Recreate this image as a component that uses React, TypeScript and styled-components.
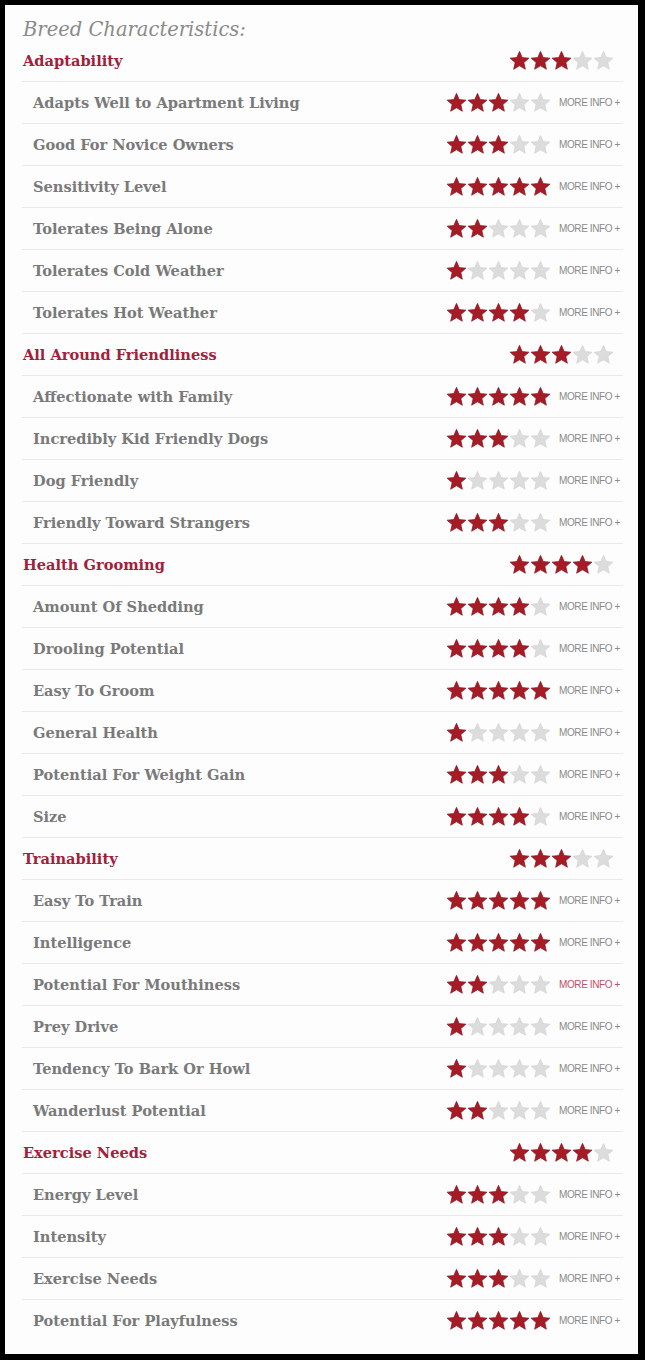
import React from 'react';
import styled, { createGlobalStyle } from 'styled-components';

const GlobalStyle = createGlobalStyle`
  html, body {
    margin: 0;
    padding: 0;
    background: #000;
  }
`;

type Trait = { name: string; score: number; active?: boolean };
type Group = { title: string; score: number; traits: Trait[] };

const groups: Group[] = [
  {
    title: 'Adaptability',
    score: 3,
    traits: [
      { name: 'Adapts Well to Apartment Living', score: 3 },
      { name: 'Good For Novice Owners', score: 3 },
      { name: 'Sensitivity Level', score: 5 },
      { name: 'Tolerates Being Alone', score: 2 },
      { name: 'Tolerates Cold Weather', score: 1 },
      { name: 'Tolerates Hot Weather', score: 4 },
    ],
  },
  {
    title: 'All Around Friendliness',
    score: 3,
    traits: [
      { name: 'Affectionate with Family', score: 5 },
      { name: 'Incredibly Kid Friendly Dogs', score: 3 },
      { name: 'Dog Friendly', score: 1 },
      { name: 'Friendly Toward Strangers', score: 3 },
    ],
  },
  {
    title: 'Health Grooming',
    score: 4,
    traits: [
      { name: 'Amount Of Shedding', score: 4 },
      { name: 'Drooling Potential', score: 4 },
      { name: 'Easy To Groom', score: 5 },
      { name: 'General Health', score: 1 },
      { name: 'Potential For Weight Gain', score: 3 },
      { name: 'Size', score: 4 },
    ],
  },
  {
    title: 'Trainability',
    score: 3,
    traits: [
      { name: 'Easy To Train', score: 5 },
      { name: 'Intelligence', score: 5 },
      { name: 'Potential For Mouthiness', score: 2, active: true },
      { name: 'Prey Drive', score: 1 },
      { name: 'Tendency To Bark Or Howl', score: 1 },
      { name: 'Wanderlust Potential', score: 2 },
    ],
  },
  {
    title: 'Exercise Needs',
    score: 4,
    traits: [
      { name: 'Energy Level', score: 3 },
      { name: 'Intensity', score: 3 },
      { name: 'Exercise Needs', score: 3 },
      { name: 'Potential For Playfulness', score: 5 },
    ],
  },
];

const Star = ({ on }: { on: boolean }) => (
  <svg width="21" height="21" viewBox="0 0 24 24">
    <polygon
      points="12,1.5 15.1,8.6 22.8,9.3 17,14.4 18.7,22 12,18 5.3,22 7,14.4 1.2,9.3 8.9,8.6"
      fill={on ? '#a51c27' : '#dcdcdc'}
      stroke={on ? '#8e1520' : '#d2d2d2'}
      strokeWidth="0.8"
      strokeLinejoin="round"
    />
  </svg>
);

const Stars = ({ score }: { score: number }) => (
  <StarRow>
    {[1, 2, 3, 4, 5].map((i) => (
      <Star key={i} on={i <= score} />
    ))}
  </StarRow>
);

const App = () => (
  <>
    <GlobalStyle />
    <Panel>
      <Title>Breed Characteristics:</Title>
      <List>
        {groups.map((g) => (
          <React.Fragment key={g.title}>
            <Row>
              <GroupName>{g.title}</GroupName>
              <GroupStars>
                <Stars score={g.score} />
              </GroupStars>
            </Row>
            {g.traits.map((t) => (
              <Row key={t.name}>
                <TraitName>{t.name}</TraitName>
                <Rating>
                  <Stars score={t.score} />
                  <MoreInfo $active={!!t.active}>MORE INFO +</MoreInfo>
                </Rating>
              </Row>
            ))}
          </React.Fragment>
        ))}
      </List>
    </Panel>
  </>
);

const Panel = styled.div`
  margin: 5px 7px 6px 5px;
  height: 1349px;
  background: #fdfdfd;
  box-sizing: border-box;
  padding: 0 15px 0 17px;
`;

const Title = styled.h2`
  margin: 0;
  height: 35px;
  padding-top: 15px;
  box-sizing: border-box;
  padding-left: 1px;
  font-family: "DejaVu Serif", serif;
  font-style: italic;
  font-weight: normal;
  font-size: 19.5px;
  line-height: 20px;
  color: #8a8a8a;
`;

const List = styled.div`
  display: flex;
  flex-direction: column;
`;

const Row = styled.div`
  display: flex;
  align-items: center;
  justify-content: space-between;
  height: 42px;
  box-sizing: border-box;
  & + & {
    border-top: 1px solid #e9e9e9;
  }
  &:first-child {
    height: 41px;
  }
`;

const GroupName = styled.span`
  padding-left: 1px;
  font-family: "DejaVu Serif", serif;
  font-weight: bold;
  font-size: 14.6px;
  color: #a3203a;
`;

const TraitName = styled.span`
  padding-left: 11px;
  font-family: "DejaVu Serif", serif;
  font-weight: bold;
  font-size: 14.6px;
  color: #7a7a7a;
`;

const GroupStars = styled.div`
  padding-right: 9px;
`;

const Rating = styled.div`
  display: flex;
  align-items: center;
  gap: 8px;
  padding-right: 1px;
`;

const StarRow = styled.div`
  display: flex;
  gap: 0;
`;

const MoreInfo = styled.span<{ $active: boolean }>`
  width: 63px;
  font-family: "Liberation Sans", Arial, sans-serif;
  font-size: 10px;
  letter-spacing: -0.4px;
  color: ${(p) => (p.$active ? '#c0506a' : '#8a8a8a')};
  white-space: nowrap;
`;

export default App;
